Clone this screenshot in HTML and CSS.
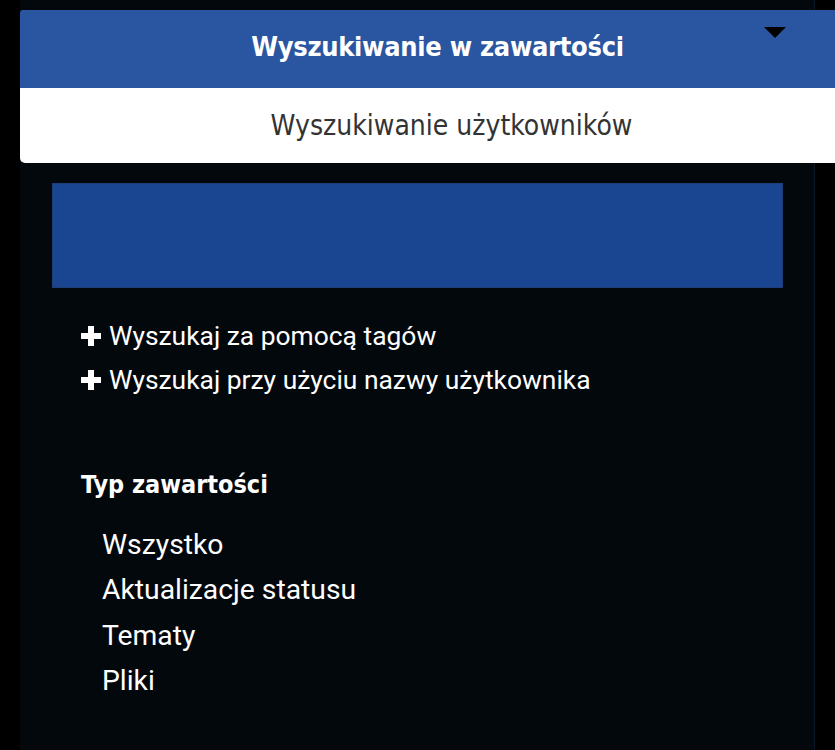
FILE: index.html
```html
<!DOCTYPE html>
<html lang="pl">
<head>
<meta charset="utf-8">
<title>Wyszukiwanie</title>
<link rel="stylesheet" href="styles.css">
</head>
<body>
<div class="panel">
  <div class="tabs">
    <div class="tab tab-active">
      <span class="tab-title">Wyszukiwanie w zawartości</span>
      <span class="caret"></span>
    </div>
    <div class="tab tab-plain">
      <span class="tab-sub">Wyszukiwanie użytkowników</span>
    </div>
  </div>
  <div class="content">
    <div class="search-box"></div>
    <ul class="options">
      <li class="option"><span class="plus"></span>Wyszukaj za pomocą tagów</li>
      <li class="option"><span class="plus"></span>Wyszukaj przy użyciu nazwy użytkownika</li>
    </ul>
    <h3 class="section-title">Typ zawartości</h3>
    <ul class="types">
      <li>Wszystko</li>
      <li>Aktualizacje statusu</li>
      <li>Tematy</li>
      <li>Pliki</li>
    </ul>
  </div>
</div>
</body>
</html>
```

FILE: styles.css
```css
html, body {
  margin: 0;
  padding: 0;
  background: #000;
  overflow: hidden;
}
body {
  width: 835px;
  height: 750px;
  font-family: Roboto, "Liberation Sans", sans-serif;
}
.panel {
  margin-left: 20px;
  width: 795px;
  height: 750px;
  background: #03080d;
  border-right: 1px solid #0a1827;
  padding-top: 10px;
  box-sizing: border-box;
}
.tabs {
  width: 835px;
  display: flex;
  flex-direction: column;
}
.tab {
  display: flex;
  align-items: center;
  justify-content: center;
  position: relative;
}
.tab-active {
  height: 78px;
  background: #2a55a0;
  border-radius: 3px 0 0 0;
}
.tab-title {
  font-family: "DejaVu Sans Condensed", "DejaVu Sans", sans-serif;
  font-weight: bold;
  font-size: 27px;
  color: #fff;
  letter-spacing: -0.3px;
  margin-top: -6px;
}
.caret {
  position: absolute;
  left: 744px;
  top: 17px;
  width: 0;
  height: 0;
  border-left: 11px solid transparent;
  border-right: 11px solid transparent;
  border-top: 11px solid #000;
}
.tab-plain {
  height: 75px;
  background: #fff;
  border-radius: 0 0 0 5px;
  padding-left: 28px;
  box-sizing: border-box;
}
.tab-sub {
  font-family: "DejaVu Sans Condensed", "DejaVu Sans", sans-serif;
  font-weight: 200;
  font-size: 28px;
  color: #333;
  margin-top: 0;
}
.content {
  padding: 20px 32px 0 32px;
}
.search-box {
  height: 105px;
  width: 731px;
  background: #1a4591;
  border: 1px solid #1d3e78;
  box-sizing: border-box;
}
.options {
  list-style: none;
  margin: 26px 0 0 0;
  padding: 0 0 0 29px;
}
.option {
  display: flex;
  align-items: center;
  height: 44px;
  font-size: 26.4px;
  color: #fff;
}
.plus {
  width: 20px;
  height: 20px;
  margin-right: 8px;
  position: relative;
  flex: none;
}
.plus::before,
.plus::after {
  content: "";
  position: absolute;
  background: #fff;
}
.plus::before {
  left: 7px;
  top: 0;
  width: 6px;
  height: 20px;
}
.plus::after {
  left: 0;
  top: 7px;
  width: 20px;
  height: 6px;
}
.section-title {
  margin: 67px 0 0 29px;
  font-family: "DejaVu Sans Condensed", "DejaVu Sans", sans-serif;
  font-weight: bold;
  font-size: 25px;
  color: #fff;
  line-height: 32px;
}
.types {
  list-style: none;
  margin: 21px 0 0 0;
  padding: 0 0 0 50px;
}
.types li {
  font-size: 28.3px;
  color: #fff;
  height: 45.3px;
  line-height: 45.3px;
}
```
